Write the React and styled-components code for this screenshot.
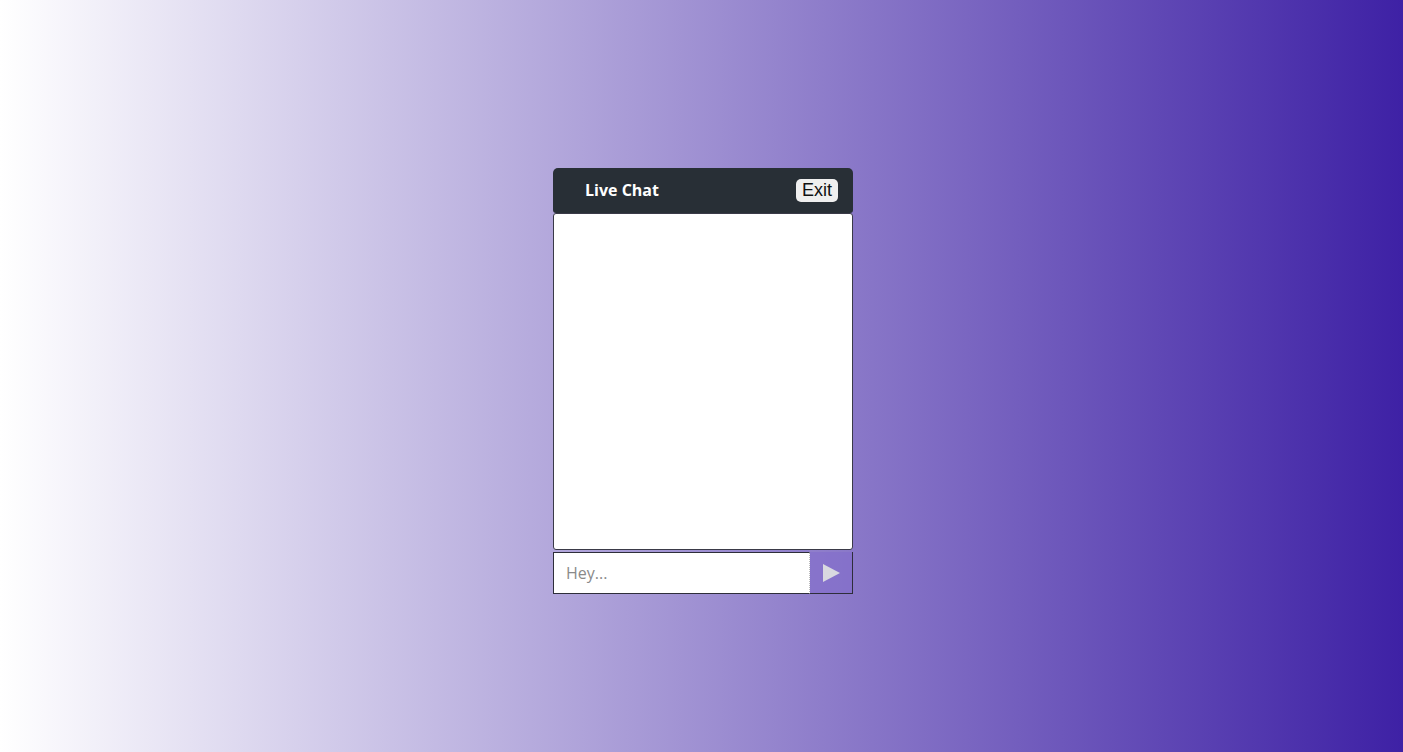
import React from "react";
import styled, { createGlobalStyle } from "styled-components";

const Global = createGlobalStyle`
  html, body { margin: 0; padding: 0; }
  body { font-family: "Open Sans", sans-serif; }
`;

const Page = styled.div`
  width: 100%;
  height: 752px;
  background: linear-gradient(to right, #ffffff, #3e21a5);
  display: flex;
  justify-content: center;
  align-items: flex-start;
  padding: 168px 0 0 3px;
  box-sizing: border-box;
`;

const Chat = styled.div`
  width: 300px;
  display: flex;
  flex-direction: column;
`;

const Header = styled.div`
  height: 45px;
  background: #282f36;
  border-radius: 5px 5px 3px 3px;
  display: flex;
  align-items: center;
  justify-content: space-between;
  padding: 0 15px 1px 32px;
  box-sizing: border-box;
`;

const Title = styled.span`
  color: #ffffff;
  font-family: "Open Sans", sans-serif;
  font-weight: 700;
  font-size: 16px;
`;

const ExitButton = styled.button`
  font-family: "Liberation Sans", Arial, sans-serif;
  font-size: 18px;
  color: #111;
  background: #efefef;
  border: none;
  border-radius: 5px;
  height: 23px;
  padding: 0 6px;
  line-height: 23px;
  cursor: pointer;
`;

const Messages = styled.div`
  height: 337px;
  background: #ffffff;
  border: 1px solid #3a3a48;
  border-radius: 3px;
  box-sizing: border-box;
`;

const InputRow = styled.form`
  margin-top: 2px;
  height: 42px;
  display: flex;
  margin-bottom: 0;
`;

const TextInput = styled.input`
  width: 257px;
  height: 42px;
  box-sizing: border-box;
  border: 1px solid #2e2e3a;
  border-right: 1px dotted #bbb;
  padding: 0 12px;
  font-family: "Open Sans", sans-serif;
  font-size: 16px;
  outline: none;
  &::placeholder { color: #8a8a8a; }
`;

const SendButton = styled.button`
  flex: 1;
  height: 42px;
  box-sizing: border-box;
  background: rgba(130, 108, 204, 0.6);
  border: none;
  border-right: 1px solid #2e2e3a;
  border-bottom: 1px solid #2e2e3a;
  display: flex;
  align-items: center;
  justify-content: center;
  padding: 0;
  cursor: pointer;
`;

export default function App() {
  return (
    <>
      <Global />
      <Page>
        <Chat>
          <Header>
            <Title>Live Chat</Title>
            <ExitButton>Exit</ExitButton>
          </Header>
          <Messages />
          <InputRow onSubmit={(e) => e.preventDefault()}>
            <TextInput placeholder="Hey..." />
            <SendButton type="submit">
              <svg width="20" height="20" viewBox="0 0 20 20">
                <polygon points="2,1 19,10 2,19" fill="#d9d9e0" />
              </svg>
            </SendButton>
          </InputRow>
        </Chat>
      </Page>
    </>
  );
}
